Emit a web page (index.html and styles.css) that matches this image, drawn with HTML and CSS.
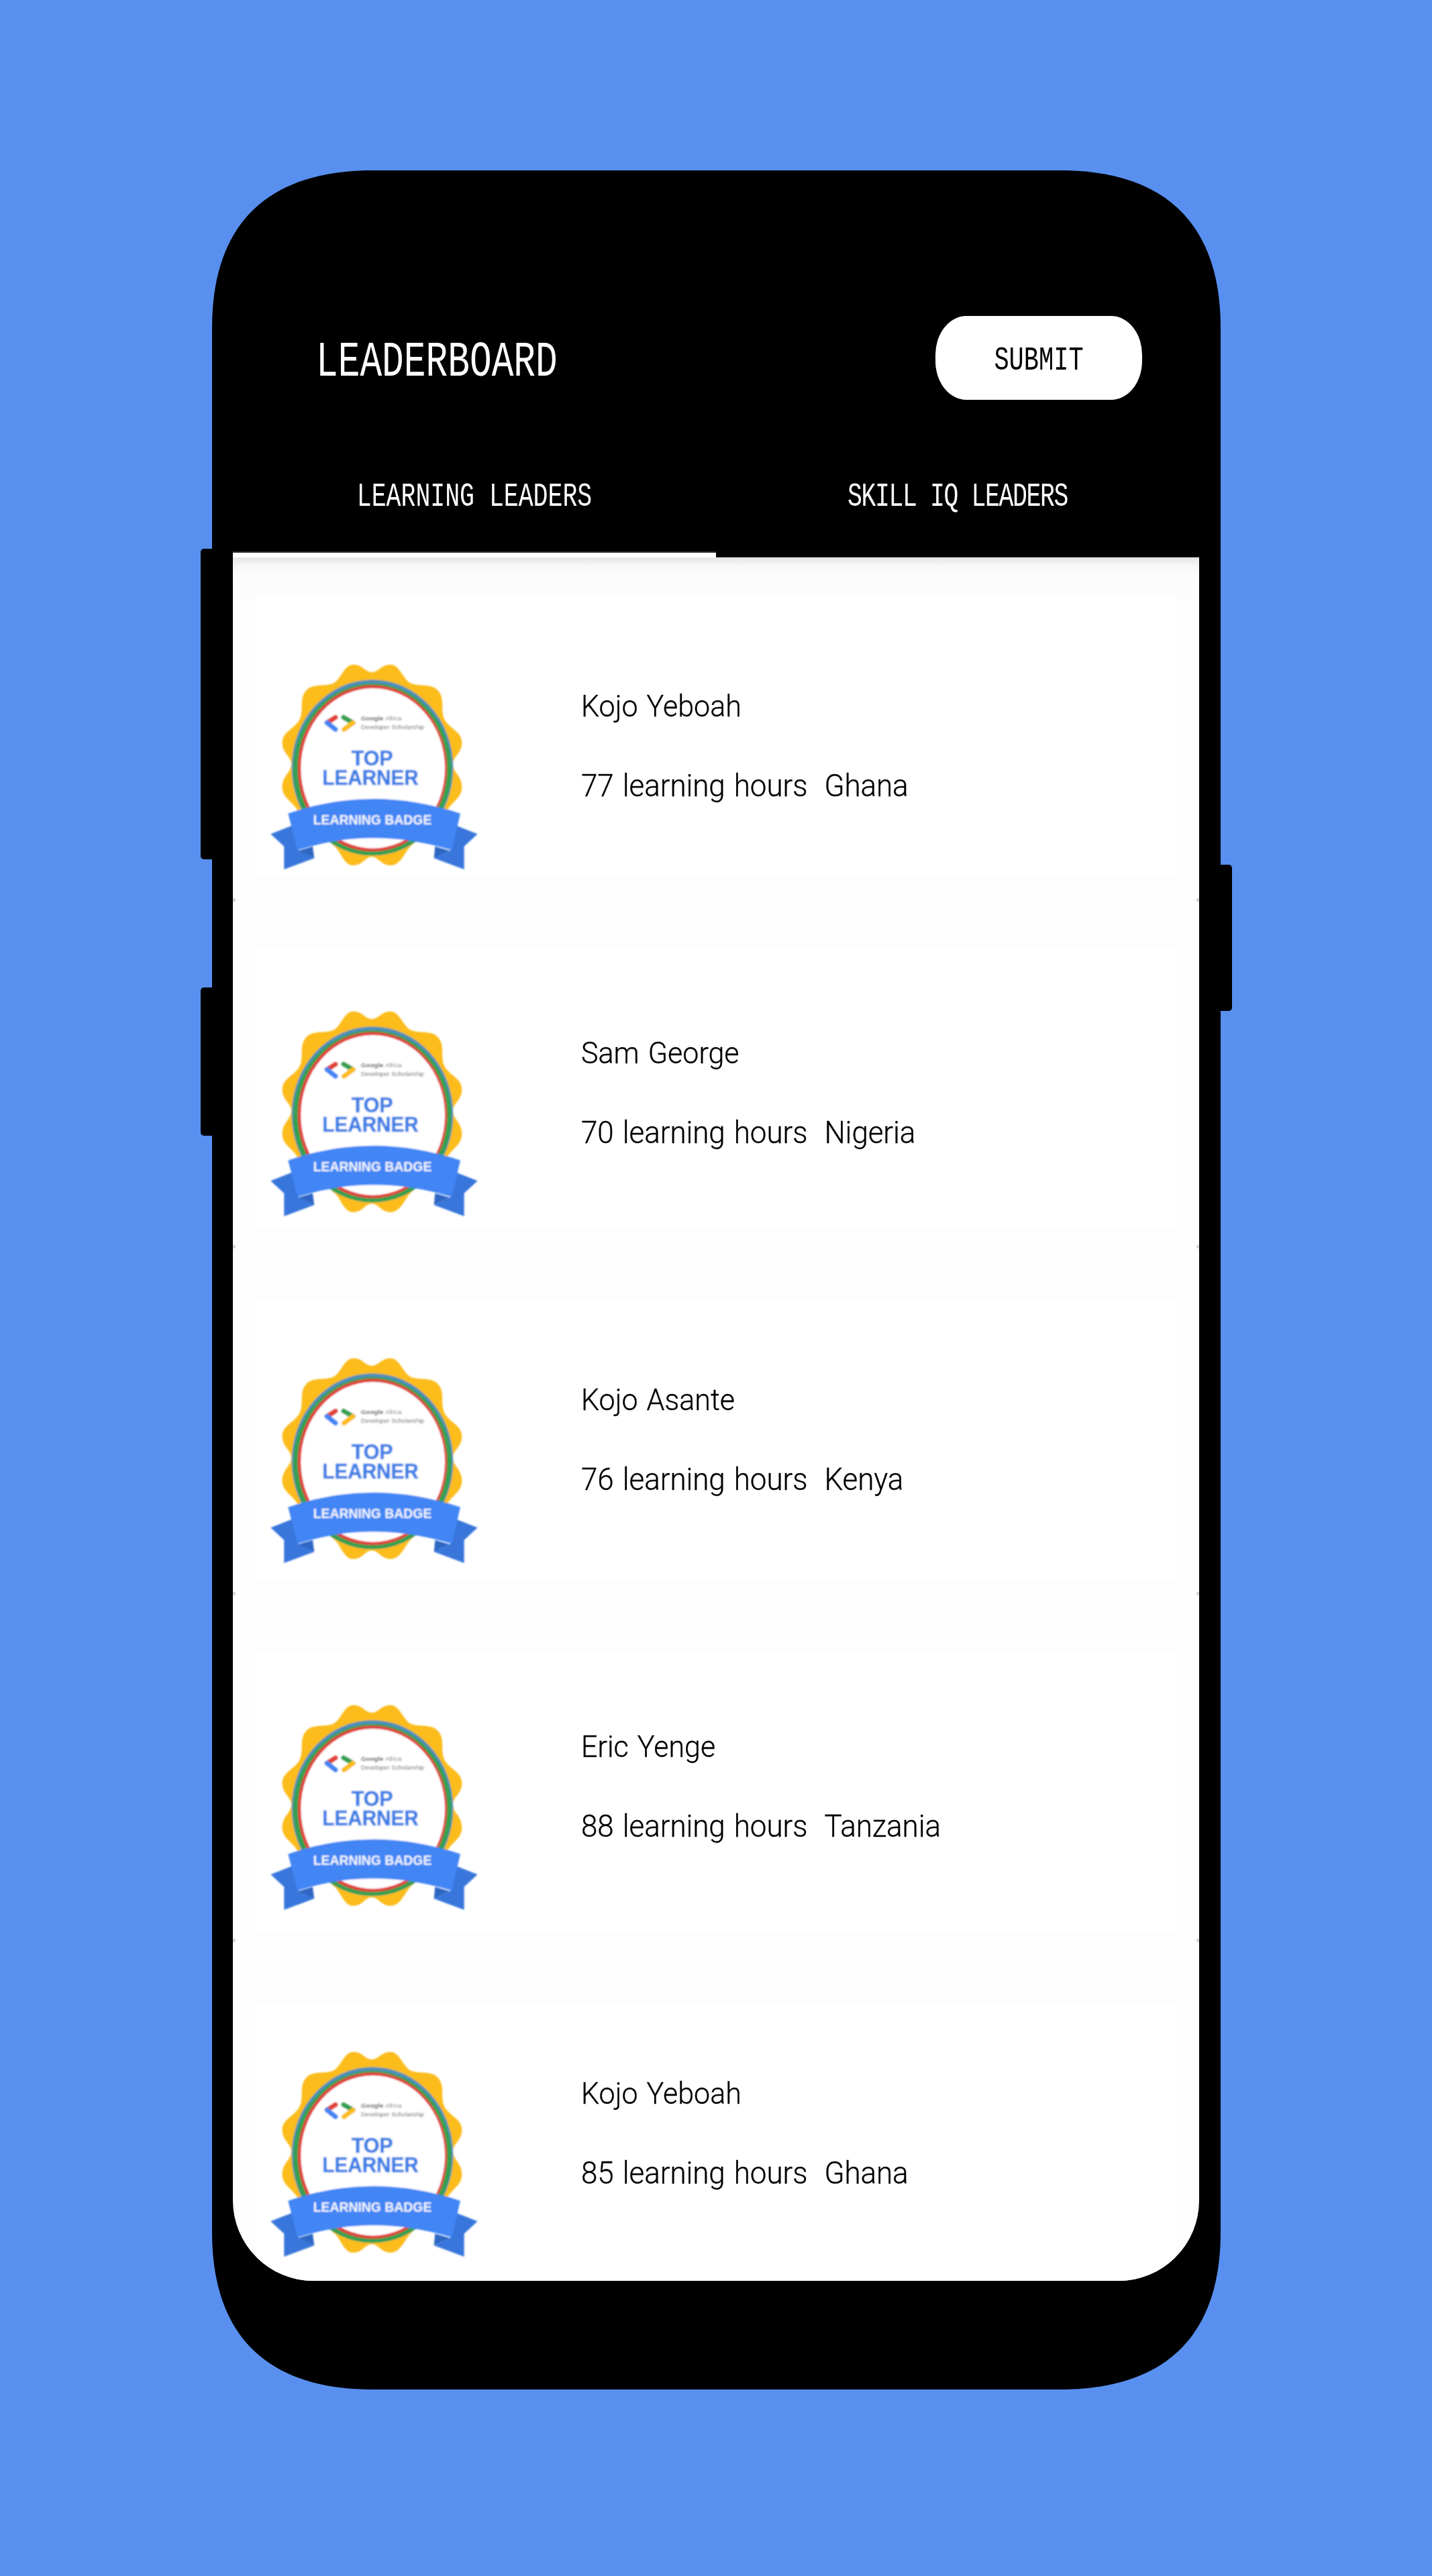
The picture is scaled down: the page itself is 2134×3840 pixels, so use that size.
FILE: index.html
```html
<!DOCTYPE html>
<html lang="en">
<head>
<meta charset="utf-8">
<title>Leaderboard</title>
<link rel="stylesheet" href="styles.css">
</head>
<body>
<svg class="defs" width="0" height="0" aria-hidden="true">
  <defs>
    <filter id="soft" x="-5%" y="-5%" width="110%" height="110%"><feGaussianBlur stdDeviation="3"/></filter>
    <symbol id="badge" viewBox="0 0 1080 1080">
      <g filter="url(#soft)">
        <path fill="#fbbc1c" d="M440 92C482 92 492 126 522 126C552 126 565 92 605 92C650 92 662 165 702 178C745 192 790 175 820 210C852 248 825 300 850 342C875 382 925 392 925 442C925 490 885 502 885 538C885 574 925 590 925 640C925 690 880 705 860 745L700 900C670 925 655 990 605 990C565 990 552 952 522 952C492 952 482 990 440 990C395 990 385 925 350 900L190 745C170 705 122 690 122 640C122 590 162 574 162 538C162 502 122 490 122 442C122 392 172 382 197 342C222 300 195 248 227 210C257 175 302 192 345 178C385 165 395 92 440 92Z"/>
        <ellipse cx="525" cy="553" rx="361" ry="393" fill="#4f8fb8"/>
        <ellipse cx="525" cy="561" rx="354" ry="385" fill="#34a050"/>
        <ellipse cx="525" cy="556" rx="334" ry="372" fill="#e0433a"/>
        <ellipse cx="527" cy="556" rx="322" ry="358" fill="#fff"/>
        <path fill="none" stroke="#e0433a" stroke-width="22" stroke-linecap="round" d="M360 328L322 352"/>
        <path fill="none" stroke="#4285f4" stroke-width="22" stroke-linecap="round" d="M322 352L360 382"/>
        <path fill="none" stroke="#34a050" stroke-width="22" stroke-linecap="round" d="M396 328L438 352"/>
        <path fill="none" stroke="#fbbc1c" stroke-width="22" stroke-linecap="round" d="M438 352L398 382"/>
        <text class="b-google" x="474" y="342" textLength="182" lengthAdjust="spacingAndGlyphs">Google <tspan class="b-africa">Africa</tspan></text>
        <text class="b-dev" x="474" y="382" textLength="282" lengthAdjust="spacingAndGlyphs">Developer Scholarship</text>
        <text class="b-top" x="431" y="543" textLength="186" lengthAdjust="spacingAndGlyphs">TOP</text>
        <text class="b-top" x="301" y="630" textLength="430" lengthAdjust="spacingAndGlyphs">LEARNER</text>
        <path fill="#3876dc" d="M70 850L165 812L195 925L265 958L130 1008L130 905Z"/>
        <path fill="#3876dc" d="M995 850L900 812L872 925L800 958L935 1008L935 905Z"/>
        <path fill="#2f66c4" d="M192 925L258 905L265 958Z"/>
        <path fill="#2f66c4" d="M872 925L805 905L800 958Z"/>
        <path fill="#4285f4" d="M148 758Q525 626 918 758L880 922Q525 814 190 922Z"/>
        <text class="b-ribbon" x="260" y="808" textLength="530" lengthAdjust="spacingAndGlyphs">LEARNING BADGE</text>
      </g>
    </symbol>
  </defs>
</svg>

<div class="device">
  <span class="key key-left key-power"></span>
  <span class="key key-left key-volume"></span>
  <span class="key key-right"></span>

  <main class="phone">
    <header class="app-header">
      <div class="title-row">
        <h1 class="title"><span class="tall">LEADERBOARD</span></h1>
        <button class="submit" type="button"><span class="tall">SUBMIT</span></button>
      </div>
      <nav class="tabs">
        <div class="tab tab-active"><span class="tab-label tall">LEARNING LEADERS</span><i class="tab-bar"></i></div>
        <div class="tab"><span class="tab-label tab-label-tight tall">SKILL IQ LEADERS</span><i class="tab-bar"></i></div>
      </nav>
    </header>

    <section class="screen">
      <div class="cards">
        <div class="card"></div><div class="card"></div><div class="card"></div><div class="card"></div><div class="card"></div>
      </div>
      <ul class="list">
        <li class="row">
          <svg class="badge" role="img" aria-label="Top learner badge"><use href="#badge"/></svg>
          <div class="info"><p class="name">Kojo Yeboah</p><p class="meta"><span>77 learning hours</span><span>Ghana</span></p></div>
        </li>
        <li class="row">
          <svg class="badge" role="img" aria-label="Top learner badge"><use href="#badge"/></svg>
          <div class="info"><p class="name">Sam George</p><p class="meta"><span>70 learning hours</span><span>Nigeria</span></p></div>
        </li>
        <li class="row">
          <svg class="badge" role="img" aria-label="Top learner badge"><use href="#badge"/></svg>
          <div class="info"><p class="name">Kojo Asante</p><p class="meta"><span>76 learning hours</span><span>Kenya</span></p></div>
        </li>
        <li class="row">
          <svg class="badge" role="img" aria-label="Top learner badge"><use href="#badge"/></svg>
          <div class="info"><p class="name">Eric Yenge</p><p class="meta"><span>88 learning hours</span><span>Tanzania</span></p></div>
        </li>
        <li class="row">
          <svg class="badge" role="img" aria-label="Top learner badge"><use href="#badge"/></svg>
          <div class="info"><p class="name">Kojo Yeboah</p><p class="meta"><span>85 learning hours</span><span>Ghana</span></p></div>
        </li>
      </ul>
    </section>
  </main>
</div>
</body>
</html>
```

FILE: styles.css
```css
* { box-sizing: border-box; }

html, body { margin: 0; padding: 0; }

body {
  width: 2134px;
  height: 3840px;
  background: #5990f0;
  padding-top: 254px;
  overflow: hidden;
  font-family: "Liberation Mono", monospace;
}

.defs { position: absolute; }

.device {
  position: relative;
  width: 1503px;
  height: 3308px;
  margin-left: 316px;
}

.phone {
  width: 100%;
  height: 100%;
  padding: 0 32px 162px 31px;
  background: #000;
  clip-path: path("M0 235C0 79 83 0 240 0L1263 0C1420 0 1503 79 1503 235L1503 3073C1503 3229 1420 3308 1263 3308L240 3308C83 3308 0 3229 0 3073Z");
  display: flex;
  flex-direction: column;
}

.key {
  position: absolute;
  background: #000;
  width: 17px;
}
.key-left { left: -17px; border-radius: 5px 0 0 5px; }
.key-power { top: 564px; height: 463px; }
.key-volume { top: 1218px; height: 221px; }
.key-right { right: -17px; top: 1035px; height: 218px; border-radius: 0 5px 5px 0; }

.tall { display: inline-block; transform: scaleY(1.36); }

.app-header { flex: none; color: #fff; }

.title-row {
  display: flex;
  align-items: center;
  justify-content: space-between;
  padding: 217px 85px 0 124px;
}

.title {
  margin: 14px 0 0;
  font-size: 54.5px;
  font-weight: 400;
  line-height: 60px;
}

.submit {
  width: 308px;
  height: 125px;
  border: 0;
  border-radius: 46px / 58px;
  background: #fff;
  color: #000;
  font-family: inherit;
  font-size: 37px;
  line-height: 40px;
  padding: 6px 0 0;
}

.tabs { display: flex; }

.tab {
  flex: 1;
  height: 235px;
  display: flex;
  flex-direction: column;
  align-items: center;
  padding-top: 126px;
}

.tab-label { font-size: 36.5px; line-height: 40px; }
.tab-label-tight { letter-spacing: -1.4px; }

.tab-bar { margin-top: auto; height: 1px; width: 100%; background: #333; }

.tab-active .tab-bar {
  height: 9px;
  background: #fff;
  border-top: 2px solid #333;
}

.screen {
  position: relative;
  flex: 1;
  min-height: 0;
  overflow: hidden;
  border-radius: 0 0 120px 120px;
  background: linear-gradient(#e4e4e4 0, #f7f7f7 12px, #fcfcfc 30px, #fdfdfd 60px);
}

.cards {
  position: absolute;
  inset: 0;
  display: flex;
  flex-direction: column;
  gap: 105px;
  padding: 56px 35px 0;
}
.card { flex: none; height: 420px; background: #fff; }

.list {
  position: relative;
  list-style: none;
  margin: 0;
  padding: 0;
}

.row {
  position: relative;
  height: 517px;
  padding: 135px 0 0 33px;
  display: flex;
  align-items: flex-start;
  gap: 126px;
}
.row:first-child { height: 511px; padding-top: 129px; }

.row::before, .row::after {
  content: "";
  position: absolute;
  bottom: -2px;
  width: 4px;
  height: 5px;
  background: #d8d8d8;
}
.row::before { left: 0; }
.row::after { right: 0; }

.badge { flex: none; width: 360px; height: 360px; }

.info {
  padding-top: 64px;
  color: #000;
  font-family: Roboto, sans-serif;
  font-weight: 300;
  font-size: 44px;
  line-height: 54px;
  word-spacing: 2.5px;
  -webkit-text-stroke: 0.3px #000;
}

.name, .meta { margin: 0; transform: scaleY(1.05); }
.name { height: 120px; transform-origin: left top; font-size: 43px; }
.meta { display: flex; gap: 25px; letter-spacing: -0.1px; }

.b-google, .b-dev { font-family: "Liberation Sans", sans-serif; font-size: 28px; fill: #666; }
.b-google { font-weight: 700; fill: #555; }
.b-africa { font-weight: 400; fill: #777; }
.b-dev { font-size: 27.5px; }
.b-top {
  font-family: "Liberation Sans", sans-serif;
  font-weight: 700;
  font-size: 96px;
  fill: #3d7fe6;
  stroke: #3d7fe6;
  stroke-width: 2px;
}
.b-ribbon {
  font-family: "Liberation Sans", sans-serif;
  font-weight: 700;
  font-size: 62px;
  fill: #f2f6ff;
}
```
